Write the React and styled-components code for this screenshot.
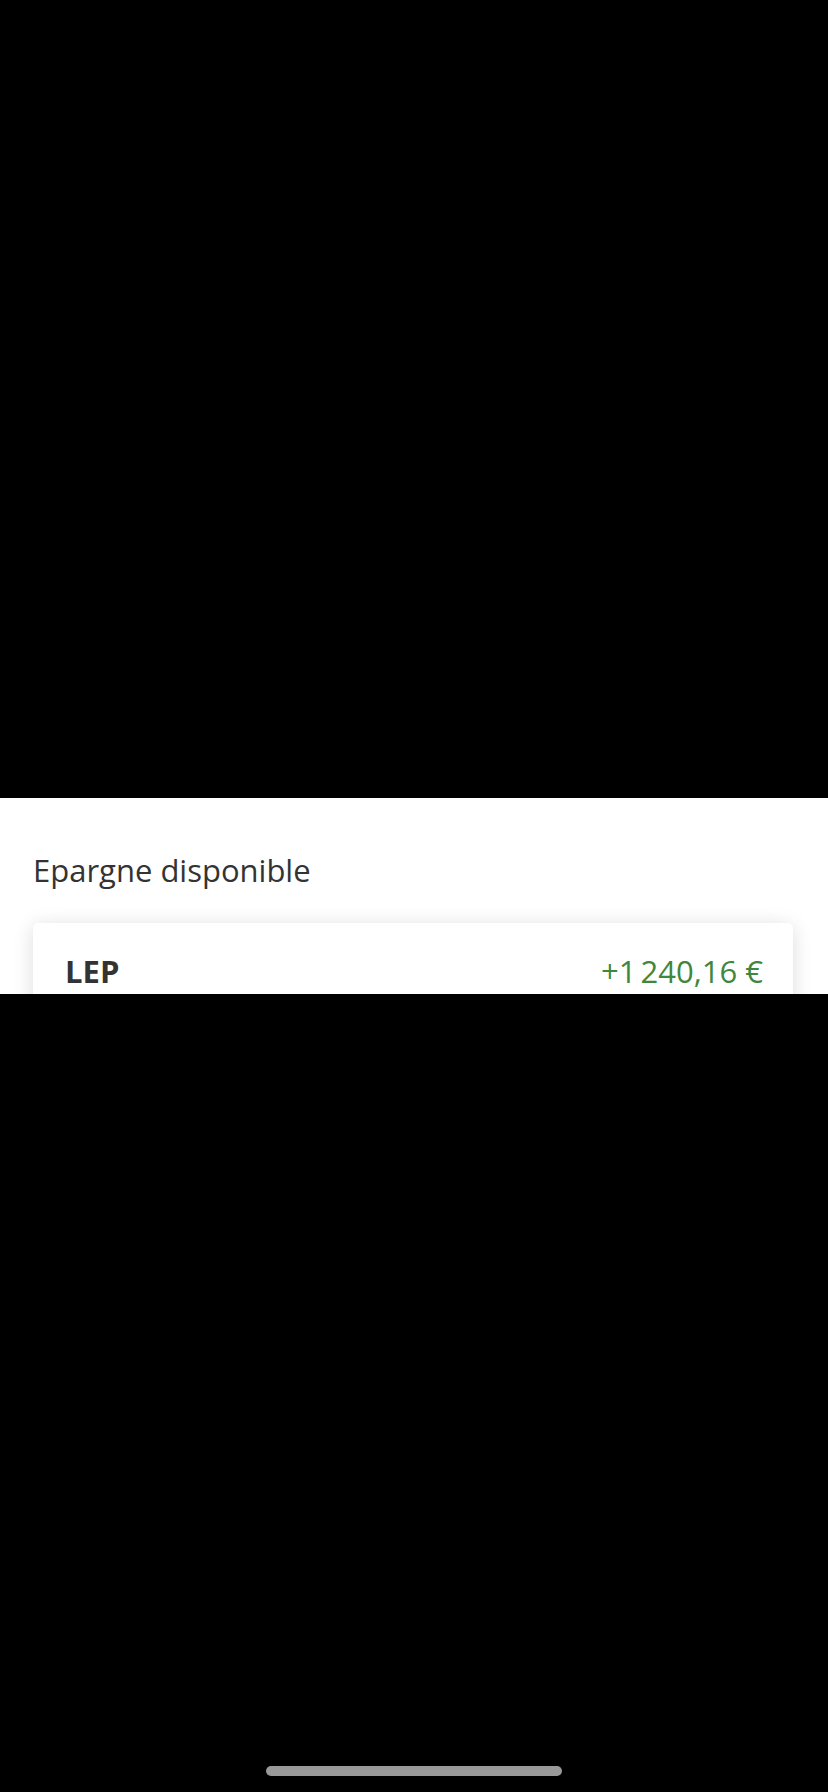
import React from "react"
import styled, { createGlobalStyle } from "styled-components"

const GlobalStyle = createGlobalStyle`
  html, body {
    margin: 0;
    padding: 0;
    background: #000;
  }
  body {
    font-family: "Open Sans", "Noto Sans", sans-serif;
  }
`

const Screen = styled.div`
  width: 828px;
  height: 1792px;
  background: #000;
  display: flex;
  flex-direction: column;
  overflow: hidden;
`

const TopArea = styled.div`
  height: 798px;
  flex-shrink: 0;
`

const Sheet = styled.section`
  height: 196px;
  flex-shrink: 0;
  background: #fff;
  overflow: hidden;
  padding: 52px 35px 0 33px;
  box-sizing: border-box;
`

const SheetTitle = styled.h2`
  margin: 0 0 32px 0;
  font-size: 31px;
  line-height: 41px;
  font-weight: 400;
  color: #333;
`

const AccountCard = styled.div`
  background: #fff;
  border-radius: 5px;
  box-shadow: 0 3px 20px rgba(0, 0, 0, 0.14);
  padding: 28px 30px 28px 32px;
  display: flex;
  justify-content: space-between;
  align-items: baseline;
`

const AccountName = styled.span`
  font-size: 31px;
  line-height: 40px;
  font-weight: 700;
  color: #333;
`

const Amount = styled.span`
  font-size: 31px;
  line-height: 40px;
  color: ${(props) => (props.$positive ? "#3f873d" : "#c0392b")};
`

const Bottom = styled.div`
  flex: 1;
  display: flex;
  justify-content: center;
  align-items: flex-end;
  padding-bottom: 16px;
`

const HomeIndicator = styled.div`
  width: 296px;
  height: 10px;
  border-radius: 5px;
  background: #999;
`

export default function App() {
  return (
    <>
      <GlobalStyle />
      <Screen>
        <TopArea />
        <Sheet>
          <SheetTitle>Epargne disponible</SheetTitle>
          <AccountCard>
            <AccountName>LEP</AccountName>
            <Amount $positive>{"+1\u202F240,16\u00A0€"}</Amount>
          </AccountCard>
        </Sheet>
        <Bottom>
          <HomeIndicator />
        </Bottom>
      </Screen>
    </>
  )
}
